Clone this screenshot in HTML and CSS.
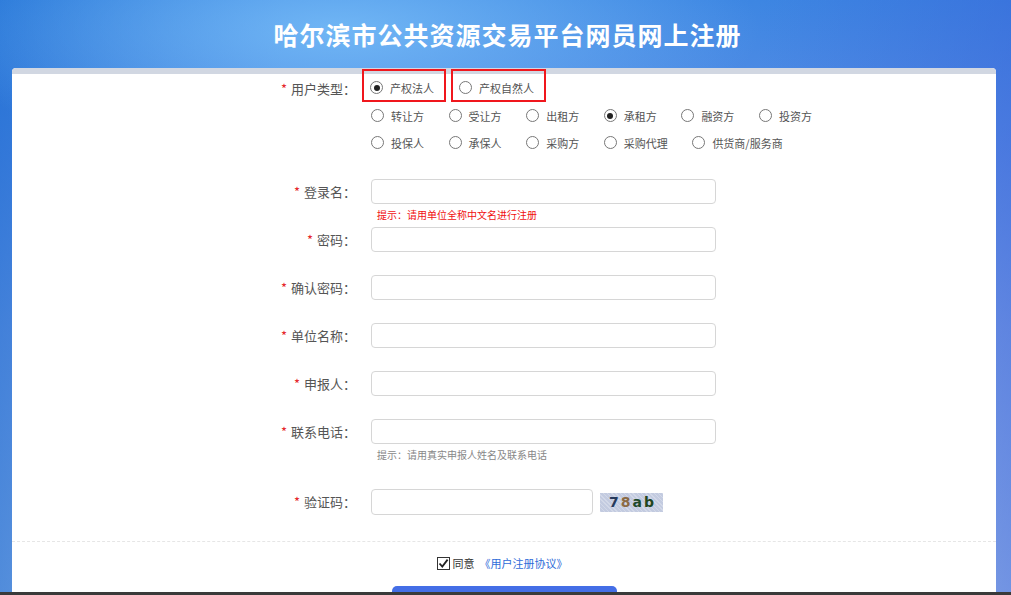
FILE: index.html
```html
<!DOCTYPE html>
<html>

<head>
    <meta charset="utf-8">
    <title>哈尔滨市公共资源交易平台网员网上注册</title>
    <link rel="stylesheet" href="styles.css">
</head>

<body>
    <div class="header">
        <h1>哈尔滨市公共资源交易平台网员网上注册</h1>
    </div>

    <div class="card">
        <div class="card-strip"></div>

        <form class="reg-form">
            <div class="row row-type">
                <label class="row-label"><span class="star">*</span>用户类型：</label>
                <div class="row-field">
                    <div class="radio-line first-line">
                        <label class="radio-item marked first"><span class="radio checked"></span>产权法人</label>
                        <label class="radio-item marked"><span class="radio"></span>产权自然人</label>
                    </div>
                    <div class="radio-line">
                        <label class="radio-item"><span class="radio"></span>转让方</label>
                        <label class="radio-item"><span class="radio"></span>受让方</label>
                        <label class="radio-item"><span class="radio"></span>出租方</label>
                        <label class="radio-item"><span class="radio checked"></span>承租方</label>
                        <label class="radio-item"><span class="radio"></span>融资方</label>
                        <label class="radio-item"><span class="radio"></span>投资方</label>
                    </div>
                    <div class="radio-line">
                        <label class="radio-item"><span class="radio"></span>投保人</label>
                        <label class="radio-item"><span class="radio"></span>承保人</label>
                        <label class="radio-item"><span class="radio"></span>采购方</label>
                        <label class="radio-item"><span class="radio"></span>采购代理</label>
                        <label class="radio-item"><span class="radio"></span>供货商/服务商</label>
                    </div>
                </div>
            </div>

            <div class="row no-gap">
                <label class="row-label"><span class="star">*</span>登录名：</label>
                <div class="row-field">
                    <input type="text" class="text-input">
                    <div class="hint hint-red">提示：请用单位全称中文名进行注册</div>
                </div>
            </div>

            <div class="row">
                <label class="row-label"><span class="star">*</span>密码：</label>
                <div class="row-field"><input type="password" class="text-input"></div>
            </div>

            <div class="row">
                <label class="row-label"><span class="star">*</span>确认密码：</label>
                <div class="row-field"><input type="password" class="text-input"></div>
            </div>

            <div class="row">
                <label class="row-label"><span class="star">*</span>单位名称：</label>
                <div class="row-field"><input type="text" class="text-input"></div>
            </div>

            <div class="row">
                <label class="row-label"><span class="star">*</span>申报人：</label>
                <div class="row-field"><input type="text" class="text-input"></div>
            </div>

            <div class="row tel-row">
                <label class="row-label"><span class="star">*</span>联系电话：</label>
                <div class="row-field">
                    <input type="text" class="text-input">
                    <div class="hint hint-gray">提示：请用真实申报人姓名及联系电话</div>
                </div>
            </div>

            <div class="row code-row">
                <label class="row-label"><span class="star">*</span>验证码：</label>
                <div class="row-field code-field">
                    <input type="text" class="text-input code-input">
                    <span class="captcha"><i class="c1">7</i><i class="c2">8</i><i class="c3">a</i><i class="c4">b</i></span>
                </div>
            </div>

            <div class="agree-section">
                <div class="agree-line">
                    <span class="checkbox">
                        <svg width="11" height="11" viewBox="0 0 11 11"><path d="M1.5 5.5 L4.3 8.6 L9.6 1.6" fill="none" stroke="#222" stroke-width="1.8"/></svg>
                    </span>
                    <span class="agree-text">同意</span>
                    <a class="agree-link" href="#">《用户注册协议》</a>
                </div>
                <button type="button" class="submit-btn"></button>
            </div>
        </form>
    </div>

    <div class="bottom-bar"></div>
</body>

</html>
```

FILE: styles.css
```css
body {
    margin: 0;
    min-height: 100vh;
    font-family: "Noto Sans CJK SC", "Noto Sans", sans-serif;
    background:
        radial-gradient(ellipse 420px 130px at 340px 30px, rgba(120, 190, 248, 0.85), rgba(120, 190, 248, 0) 100%),
        linear-gradient(90deg, rgba(16, 100, 205, 0.55) 0, rgba(16, 100, 205, 0) 28%, rgba(16, 100, 205, 0) 75%, rgba(55, 95, 215, 0.45) 100%),
        linear-gradient(180deg, #3d86e2 0, #5c8fe6 160px, #7fa3e8 330px, #a1beec 595px);
    overflow: hidden;
}

.header {
    height: 68px;
    display: flex;
    align-items: center;
    justify-content: center;
}

.header h1 {
    margin: 0;
    color: #fff;
    font-size: 25px;
    font-weight: bold;
    letter-spacing: 1px;
    line-height: 68px;
    padding-left: 4px;
}

.card {
    margin-left: 12px;
    width: 984px;
    background: #fff;
    border-radius: 4px 4px 0 0;
    min-height: 560px;
}

.card-strip {
    height: 6px;
    background: #d1d7e2;
    border-radius: 4px 4px 0 0;
}

.reg-form {
    margin-top: -5px;
}

.row {
    display: grid;
    grid-template-columns: 344px 1fr;
    column-gap: 15px;
    margin-bottom: 23px;
}

.row.no-gap {
    margin-bottom: 0;
}

.row.tel-row {
    margin-bottom: 22px;
}

.row.code-row {
    margin-bottom: 26px;
}

.row-label {
    text-align: right;
    font-size: 13px;
    line-height: 25px;
    color: #555;
}

.code-row .row-label {
    line-height: 26px;
}

.row-type .row-label {
    padding-top: 6.5px;
}

.star {
    color: #e5262b;
    font-size: 13px;
    margin-right: 4px;
}

.radio-line {
    display: flex;
    align-items: center;
    height: 27px;
}

.radio-line.first-line {
    height: 33px;
    align-items: stretch;
}

.radio-item {
    display: inline-flex;
    align-items: center;
    font-size: 11px;
    color: #555;
    margin-right: 24.6px;
    white-space: nowrap;
}

.radio {
    width: 11px;
    height: 11px;
    border: 1px solid #777;
    border-radius: 50%;
    background: #fff;
    margin-right: 7px;
    position: relative;
    flex-shrink: 0;
}

.radio.checked::after {
    content: "";
    position: absolute;
    left: 2.5px;
    top: 2.5px;
    width: 6px;
    height: 6px;
    border-radius: 50%;
    background: #222;
}

.radio-item.marked {
    border: 2px solid #f0171d;
    padding: 4px 10px 0 6px;
    margin-right: 0;
}

.radio-item.marked.first {
    margin-left: -9px;
    margin-right: 5px;
}

.text-input {
    display: block;
    width: 345px;
    height: 25px;
    box-sizing: border-box;
    border: 1px solid #d6d6d6;
    border-radius: 4px;
    padding: 0 8px;
    font-size: 13px;
    outline: none;
    background: #fff;
}

.hint {
    height: 23px;
    box-sizing: border-box;
    padding-top: 4px;
    padding-left: 6px;
    font-size: 10px;
    line-height: 14px;
}

.hint-red {
    color: #f01010;
}

.hint-gray {
    color: #888;
}

.code-field {
    display: flex;
    align-items: center;
}

.code-input {
    width: 222px;
    height: 26px;
}

.captcha {
    margin-left: 7px;
    width: 63px;
    height: 19px;
    display: inline-flex;
    align-items: center;
    justify-content: center;
    gap: 2px;
    background:
        repeating-linear-gradient(45deg, rgba(255, 255, 255, 0.25) 0 1px, rgba(255, 255, 255, 0) 1px 3px),
        #c3cbe0;
    font-family: "DejaVu Sans", sans-serif;
    font-weight: bold;
    font-size: 14px;
    line-height: 19px;
    padding-top: 1px;
    box-sizing: border-box;
}

.captcha i {
    font-style: normal;
}

.c1 {
    color: #263a5c;
}

.c2 {
    color: #8b6a44;
}

.c3 {
    color: #1f4a2c;
}

.c4 {
    color: #22461f;
}

.agree-section {
    border-top: 1px dashed #e6e6e6;
    padding-top: 12px;
    display: flex;
    flex-direction: column;
    align-items: center;
}

.agree-line {
    display: flex;
    align-items: center;
    height: 18px;
    font-size: 11px;
    margin-right: 4px;
}

.checkbox {
    width: 11px;
    height: 11px;
    border: 1px solid #333;
    background: #fff;
    display: inline-flex;
    align-items: center;
    justify-content: center;
    margin-right: 3px;
}

.agree-text {
    color: #333;
    margin-right: 5px;
}

.agree-link {
    color: #2f6bd8;
    text-decoration: none;
}

.submit-btn {
    margin-top: 14px;
    width: 225px;
    height: 38px;
    border: none;
    border-radius: 5px;
    background: #446ee6;
}

.bottom-bar {
    position: fixed;
    left: 0;
    right: 0;
    bottom: 0;
    height: 3px;
    background: #3a3a3a;
}
```
